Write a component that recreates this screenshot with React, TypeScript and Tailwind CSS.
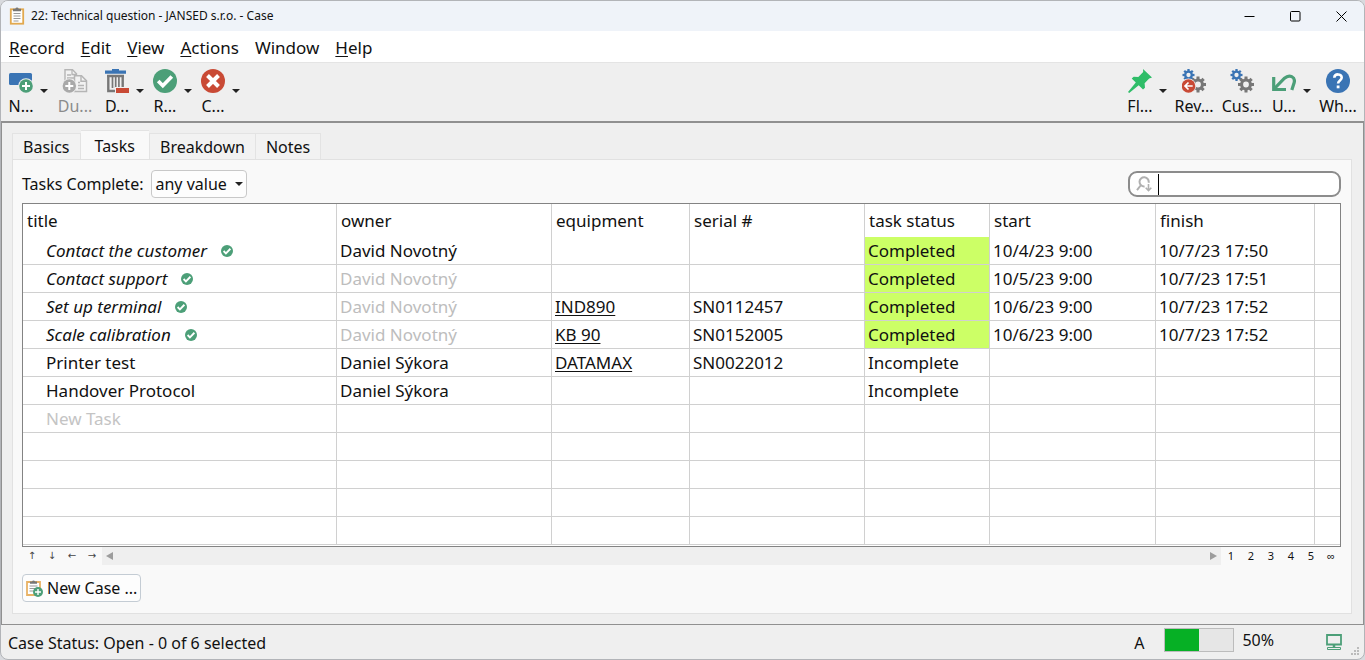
import type { ReactNode } from 'react';

type Task = {
  title: string;
  done?: boolean;
  owner: string;
  inherited?: boolean;
  equipment?: string;
  serial?: string;
  status: string;
  start?: string;
  finish?: string;
};

const tasks: Task[] = [
  { title: 'Contact the customer', done: true, owner: 'David Novotný', status: 'Completed', start: '10/4/23 9:00', finish: '10/7/23 17:50' },
  { title: 'Contact support', done: true, owner: 'David Novotný', inherited: true, status: 'Completed', start: '10/5/23 9:00', finish: '10/7/23 17:51' },
  { title: 'Set up terminal', done: true, owner: 'David Novotný', inherited: true, equipment: 'IND890', serial: 'SN0112457', status: 'Completed', start: '10/6/23 9:00', finish: '10/7/23 17:52' },
  { title: 'Scale calibration', done: true, owner: 'David Novotný', inherited: true, equipment: 'KB 90', serial: 'SN0152005', status: 'Completed', start: '10/6/23 9:00', finish: '10/7/23 17:52' },
  { title: 'Printer test', owner: 'Daniel Sýkora', equipment: 'DATAMAX', serial: 'SN0022012', status: 'Incomplete' },
  { title: 'Handover Protocol', owner: 'Daniel Sýkora', status: 'Incomplete' },
];

const columns = ['title', 'owner', 'equipment', 'serial #', 'task status', 'start', 'finish', ''];
const menus = ['Record', 'Edit', 'View', 'Actions', 'Window', 'Help'];

function Caret() {
  return (
    <svg width="8" height="4" viewBox="0 0 8 4" aria-hidden="true">
      <path d="M0 0h8L4 4z" fill="#222" />
    </svg>
  );
}

function ClipboardIcon() {
  return (
    <svg width="16" height="18" viewBox="0 0 16 18" aria-hidden="true">
      <rect x="1.8" y="2.3" width="12.4" height="14.4" fill="#fff" stroke="#e2a94f" strokeWidth="1.8" />
      <path d="M4 1.8h2.3a1.8 1.8 0 0 1 3.4 0H12v2.4H4z" fill="#777" />
      <path d="M4.5 6.5h7M4.5 9h7M4.5 11.5h7M4.5 14h5" stroke="#999" strokeWidth="1.1" />
    </svg>
  );
}

function NewIcon() {
  return (
    <svg width="24" height="24" viewBox="0 0 24 24" aria-hidden="true">
      <rect x="0" y="4" width="23" height="12" rx="1.5" fill="#3a74b4" />
      <circle cx="17" cy="17" r="7.8" fill="#efefef" />
      <circle cx="17" cy="17" r="6.8" fill="#4c9f78" />
      <path d="M17 13v8M13 17h8" stroke="#fff" strokeWidth="2" />
    </svg>
  );
}

function DuplicateIcon() {
  return (
    <svg width="26" height="24" viewBox="0 0 26 24" aria-hidden="true">
      <path d="M3 .8h7.5l4 4V16H3z" fill="#f2f2f2" stroke="#b5b5b5" strokeWidth="1.4" />
      <path d="M10 1v4.5h4.5M5 6h4M5 9h7" fill="none" stroke="#b5b5b5" strokeWidth="1.3" />
      <path d="M12.5 6.8h7l5 5V22.5h-12z" fill="#f2f2f2" stroke="#b5b5b5" strokeWidth="1.5" />
      <path d="M19 7v5.3h5.3M16 13.5h2M16 16.5h6M16 19.5h6" fill="none" stroke="#b5b5b5" strokeWidth="1.4" />
      <circle cx="7.3" cy="17" r="7.6" fill="#efefef" />
      <circle cx="7.3" cy="17" r="6.7" fill="#a9a9a9" />
      <path d="M7.3 13v8M3.300 17h8" stroke="#fff" strokeWidth="2" />
    </svg>
  );
}

function DeleteIcon() {
  return (
    <svg width="24" height="24" viewBox="0 0 24 24" aria-hidden="true">
      <path d="M0 1.500h7V0h7v1.500h7V4.800H0z" fill="#3a74b4" />
      <path d="M3.300 6.500v15.500h14.400V6.500M2 7h17" fill="none" stroke="#777" strokeWidth="2.400" />
      <path d="M7.500 7.500V19M10.700 7.500V19M13.900 7.500V19" stroke="#777" strokeWidth="1.700" />
      <path d="M10 18h14v6H10z" fill="#efefef" />
      <path d="M11 19h13v5H11z" fill="#c94a35" />
    </svg>
  );
}

function CheckIcon({ size = 24 }: { size?: number }) {
  return (
    <svg width={size} height={size} viewBox="0 0 24 24" aria-hidden="true">
      <circle cx="12" cy="12" r="12" fill="#4c9f78" />
      <path d="M5.2 12l4.6 4.7 9-9.2" fill="none" stroke="#fff" strokeWidth="3.7" />
    </svg>
  );
}

function CancelIcon() {
  return (
    <svg width="24" height="24" viewBox="0 0 24 24" aria-hidden="true">
      <circle cx="12" cy="12" r="12" fill="#c94a35" />
      <path d="M6.5 6.5l11 11M17.5 6.5l-11 11" stroke="#fff" strokeWidth="4" />
    </svg>
  );
}

function PinIcon() {
  return (
    <svg width="24" height="24" viewBox="0 0 24 24" aria-hidden="true">
      <path d="M15 0l9 8.6-2.8.8-4.6 4.8.4 4.6-2 1.7-4.3-4.2L1.2 24 0 23l7.8-9.4-4.1-4.1 2-1.8 4.6.4 4.9-5z" fill="#2fbd68" />
    </svg>
  );
}

function Gear({ cx, cy, r, color }: { cx: number; cy: number; r: number; color: string }) {
  return (
    <g transform={`translate(${cx} ${cy}) scale(${r / 10})`}>
      <circle r="5.5" fill="none" stroke={color} strokeWidth="3.800" />
      {[0, 45, 90, 135, 180, 225, 270, 315].map((a) => (
        <rect key={a} x="-1.900" y="-10" width="3.800" height="4" fill={color} transform={`rotate(${a})`} />
      ))}
    </g>
  );
}

function GearsIcon({ revert = false }: { revert?: boolean }) {
  return (
    <svg width="24" height="24" viewBox="0 0 24 24" aria-hidden="true">
      <Gear cx={6.5} cy={6} r={6} color="#3a74b4" />
      <Gear cx={16} cy={15.5} r={8} color="#777" />
      {revert && (
        <>
          <circle cx="6.5" cy="17" r="7.6" fill="#efefef" />
          <circle cx="6.5" cy="17" r="6.8" fill="#c94a35" />
          <path d="M10.7 17H3.5M6.5 13.5L3 17l3.5 3.5" fill="none" stroke="#fff" strokeWidth="1.7" />
        </>
      )}
    </svg>
  );
}

function UndoIcon() {
  return (
    <svg width="24" height="24" viewBox="0 0 24 24" aria-hidden="true">
      <path d="M1.700 8v12.500H14" fill="none" stroke="#4c9f78" strokeWidth="3.200" />
      <path d="M2 20L12.500 9.200C17.500 4.800 23.500 8 22.200 13.500L19.800 21" fill="none" stroke="#4c9f78" strokeWidth="3.200" />
    </svg>
  );
}

function HelpIcon() {
  return (
    <svg width="24" height="24" viewBox="0 0 24 24" aria-hidden="true">
      <circle cx="12" cy="12" r="12" fill="#3a74b4" />
      <path d="M8.300 8.800c.2-4.600 7.600-4.400 7.400 0-.1 2.700-3.600 2.700-3.600 5.700" fill="none" stroke="#fff" strokeWidth="2.600" />
      <rect x="10.700" y="16.500" width="2.800" height="2.800" fill="#fff" />
    </svg>
  );
}

function NewCaseIcon() {
  return (
    <svg width="17" height="17" viewBox="0 0 17 17" aria-hidden="true">
      <path d="M1 2h13v13H1z" fill="#fff" stroke="#e8b265" strokeWidth="1.800" />
      <path d="M4 1.500h2a1.600 1.600 0 0 1 3 0h2v2.300H4z" fill="#777" />
      <path d="M3.500 6h8M3.500 8.500h6M3.500 11h4" stroke="#999" strokeWidth="1" />
      <circle cx="12" cy="12" r="5" fill="#4c9f78" />
      <path d="M12 9v6M9 12h6" stroke="#fff" strokeWidth="1.400" />
    </svg>
  );
}

function SearchIcon() {
  return (
    <svg width="16" height="16" viewBox="0 0 16 16" fill="none" stroke="#b0b0b0" strokeWidth="2" aria-hidden="true">
      <path d="M12.600 6.800A4.600 4.600 0 1 0 8.600 10.400M5 9L1 14.200" />
      <path d="M12.500 8v6.500M9.700 11.700l2.800 2.800 2.800-2.800" strokeWidth="1.600" />
    </svg>
  );
}

function MonitorIcon() {
  return (
    <svg width="16" height="16" viewBox="0 0 16 16" fill="none" stroke="#4c9f78" aria-hidden="true">
      <path d="M1 1h14v9.500H1z" strokeWidth="1.800" />
      <path d="M8 11v2" strokeWidth="2.500" />
      <path d="M1.500 13.500h13v2h-13z" strokeWidth="1" />
    </svg>
  );
}

function ToolButton({ icon, label, name, menu = false, disabled = false }: { icon: ReactNode; label: string; name: string; menu?: boolean; disabled?: boolean }) {
  return (
    <button type="button" aria-label={name} disabled={disabled} className="flex w-12 justify-center disabled:text-[#8b8b8b]">
      <span className="flex w-[34px] flex-col items-center">
        {icon}
        <span className="whitespace-nowrap leading-[26px]">{label}</span>
      </span>
      {menu && (
        <span className="flex h-6 w-3 items-end justify-center">
          <Caret />
        </span>
      )}
    </button>
  );
}

function TitleBar() {
  return (
    <header className="flex h-[30px] items-center bg-[#eff3f9] pl-2">
      <ClipboardIcon />
      <h1 className="ml-1.5 flex-1 text-[12px]">22: Technical question - JANSED s.r.o. - Case</h1>
      <button type="button" aria-label="Minimize" className="flex h-full w-[46px] items-center justify-center">
        <svg width="11" height="11" viewBox="0 0 11 11"><path d="M.5 5.500h10" stroke="#000" /></svg>
      </button>
      <button type="button" aria-label="Maximize" className="flex h-full w-[46px] items-center justify-center">
        <svg width="11" height="11" viewBox="0 0 11 11"><rect x=".5" y=".5" width="9.500" height="9.500" rx="1" fill="none" stroke="#000" /></svg>
      </button>
      <button type="button" aria-label="Close" className="flex h-full w-[46px] items-center justify-center">
        <svg width="11" height="11" viewBox="0 0 11 11"><path d="M.5.5l10 10M10.500.5l-10 10" stroke="#000" /></svg>
      </button>
    </header>
  );
}

function TaskTable() {
  const line = 'border-r border-b border-[#d0d0d0]';
  return (
    <div className="border border-[#838383] bg-white pb-px">
      <table className="w-full table-fixed border-separate border-spacing-0 text-left text-[17px] leading-[27px] text-[#111]">
        <colgroup>
          <col className="w-[314px]" />
          <col className="w-[215px]" />
          <col className="w-[138px]" />
          <col className="w-[175px]" />
          <col className="w-[125px]" />
          <col className="w-[166px]" />
          <col className="w-[159px]" />
          <col />
        </colgroup>
        <thead>
          <tr className="h-[33px]">
            {columns.map((c) => (
              <th key={c} scope="col" className="border-r border-[#d0d0d0] px-1 font-normal last:border-r-0">
                {c}
              </th>
            ))}
          </tr>
        </thead>
        <tbody>
          {tasks.map((t) => (
            <tr key={t.title} className="h-7">
              <td className={`${line} pl-[23px]`}>
                <span className="flex items-center gap-3.5">
                  <span className={t.done ? 'italic' : ''}>{t.title}</span>
                  {t.done && <CheckIcon size={12} />}
                </span>
              </td>
              <td className={`${line} pl-[3px] ${t.inherited ? 'text-[#bdbdbd]' : ''}`}>{t.owner}</td>
              <td className={`${line} pl-[3px]`}>
                {t.equipment && (
                  <a href="#equipment" className="underline underline-offset-2">
                    {t.equipment}
                  </a>
                )}
              </td>
              <td className={`${line} pl-[3px]`}>{t.serial}</td>
              <td className={`${line} pl-[3px] ${t.done ? 'bg-[#ccff66]' : ''}`}>{t.status}</td>
              <td className={`${line} pl-[3px]`}>{t.start}</td>
              <td className={`${line} pl-[3px]`}>{t.finish}</td>
              <td className="border-b border-[#d0d0d0]" />
            </tr>
          ))}
          {[0, 1, 2, 3, 4].map((r) => (
            <tr key={r} className="h-7">
              {columns.map((c, i) => (
                <td key={c} className={`${line} last:border-r-0 ${i === 0 ? 'pl-[23px] text-[#c4c4c4]' : ''}`}>
                  {r === 0 && i === 0 ? 'New Task' : ''}
                </td>
              ))}
            </tr>
          ))}
        </tbody>
      </table>
    </div>
  );
}

export default function App() {
  return (
    <div className="bg-[#d8dade]">
      <div className="flex min-h-screen flex-col overflow-hidden rounded-lg border border-[#b2b4b8] bg-[#efefef] font-['Noto_Sans',sans-serif] text-[16px] text-[#111]">
        <TitleBar />
        <nav aria-label="Main menu" className="flex h-8 items-center gap-4 border-b border-[#e4e4e4] bg-white px-2 pt-0.5 text-[17px]">
          {menus.map((m) => (
            <button key={m} type="button">
              {m === 'Window' ? m : (
                <>
                  <span className="underline underline-offset-2">{m[0]}</span>
                  {m.slice(1)}
                </>
              )}
            </button>
          ))}
        </nav>
        <div role="toolbar" aria-label="Record tools" className="flex h-[58px] justify-between px-0.5 pt-1.5">
          <div className="flex">
            <ToolButton icon={<NewIcon />} label="N..." name="New" menu />
            <ToolButton icon={<DuplicateIcon />} label="Du..." name="Duplicate" disabled />
            <ToolButton icon={<DeleteIcon />} label="D..." name="Delete" menu />
            <ToolButton icon={<CheckIcon />} label="R..." name="Resolve" menu />
            <ToolButton icon={<CancelIcon />} label="C..." name="Cancel" menu />
          </div>
          <div className="flex">
            <ToolButton icon={<PinIcon />} label="Fl..." name="Float" menu />
            <ToolButton icon={<GearsIcon revert />} label="Rev..." name="Revert" />
            <ToolButton icon={<GearsIcon />} label="Cus..." name="Customize" />
            <ToolButton icon={<UndoIcon />} label="U..." name="Undo" menu />
            <ToolButton icon={<HelpIcon />} label="Wh..." name="What's this" />
          </div>
        </div>

        <main className="flex flex-1 flex-col border border-t-2 border-[#909090] pt-[7px] pr-[11px] pb-2.5 pl-2.5">
          <div role="tablist" className="flex items-end">
            <button role="tab" aria-selected="false" type="button" className="h-[26px] border border-b-0 border-[#e3e3e3] bg-[#f2f2f2] px-2.5 leading-6">Basics</button>
            <button role="tab" aria-selected="true" type="button" className="-mb-px h-[30px] border-t border-[#e3e3e3] bg-[#f9f9f9] px-3.5 leading-7">Tasks</button>
            <button role="tab" aria-selected="false" type="button" className="h-[26px] border border-b-0 border-[#e3e3e3] bg-[#f2f2f2] px-2.5 leading-6">Breakdown</button>
            <button role="tab" aria-selected="false" type="button" className="h-[26px] border border-b-0 border-l-0 border-[#e3e3e3] bg-[#f2f2f2] px-2.5 leading-6">Notes</button>
          </div>
          <section className="flex-1 border border-[#e1e1e1] bg-[#f9f9f9] pt-2.5 pr-2.5 pb-[11px] pl-[9px]">
            <div className="mb-[5px] flex items-center justify-between">
              <div className="flex items-center gap-2">
                <label htmlFor="complete">Tasks Complete:</label>
                <div className="relative">
                  <select id="complete" className="block h-7 w-24 appearance-none rounded border border-[#c8c8c8] bg-[#fdfdfd] pl-[3px]">
                    <option>any value</option>
                  </select>
                  <span className="pointer-events-none absolute top-0 right-1 flex h-full items-center">
                    <Caret />
                  </span>
                </div>
              </div>
              <div className="flex h-[26px] w-[213px] items-center rounded-[9px] border-2 border-[#8c8c8c] bg-white pl-1.5">
                <SearchIcon />
                <span className="ml-1.5 h-[21px] w-px bg-black" />
                <input type="text" aria-label="Search tasks" className="h-full min-w-0 flex-1 bg-transparent outline-none" />
              </div>
            </div>
            <TaskTable />
            <div className="flex h-[18px] items-center text-[11px] leading-[18px]">
              {['↑', '↓', '←', '→'].map((a) => (
                <button key={a} type="button" className="w-5 font-['DejaVu_Sans',sans-serif] text-[10px] text-[#444]">{a}</button>
              ))}
              <div className="flex h-full flex-1 items-center justify-between bg-[#efefef] px-1">
                <svg width="7" height="8" viewBox="0 0 7 8" aria-hidden="true"><path d="M7 0v8L0 4z" fill="#9d9d9d" /></svg>
                <svg width="7" height="8" viewBox="0 0 7 8" aria-hidden="true"><path d="M0 0v8l7-4z" fill="#9d9d9d" /></svg>
              </div>
              {['1', '2', '3', '4', '5', '∞'].map((n) => (
                <button key={n} type="button" className="w-5">{n}</button>
              ))}
            </div>
            <button type="button" className="mt-[9px] flex h-7 items-center gap-1 rounded border border-[#c4ccd4] bg-[#fdfdfd] px-[3px]">
              <NewCaseIcon />
              New Case ...
            </button>
          </section>
        </main>

        <footer className="flex h-[34px] items-center pr-1 pl-[7px]">
          <span className="flex-1 pt-px">Case Status: Open - 0 of 6 selected</span>
          <span className="mr-5 pt-px">A</span>
          <div role="progressbar" aria-label="Progress" aria-valuenow={50} aria-valuemin={0} aria-valuemax={100} className="mr-2 mb-1 h-6 w-[70px] border border-[#bcbcbc] bg-[#e6e6e6]">
            <div className="h-full bg-[#06b025]" style={{ width: '50%' }} />
          </div>
          <span className="mr-13 mb-1">50%</span>
          <MonitorIcon />
          <svg className="ml-2 self-end" width="10" height="12" viewBox="0 0 10 12" fill="#bbb" aria-hidden="true">
            <path d="M7 0h2v2H7zM4 3h2v2H4zM7 3h2v2H7zM1 6h2v2H1zM4 6h2v2H4zM7 6h2v2H7z" />
          </svg>
        </footer>
      </div>
    </div>
  );
}
